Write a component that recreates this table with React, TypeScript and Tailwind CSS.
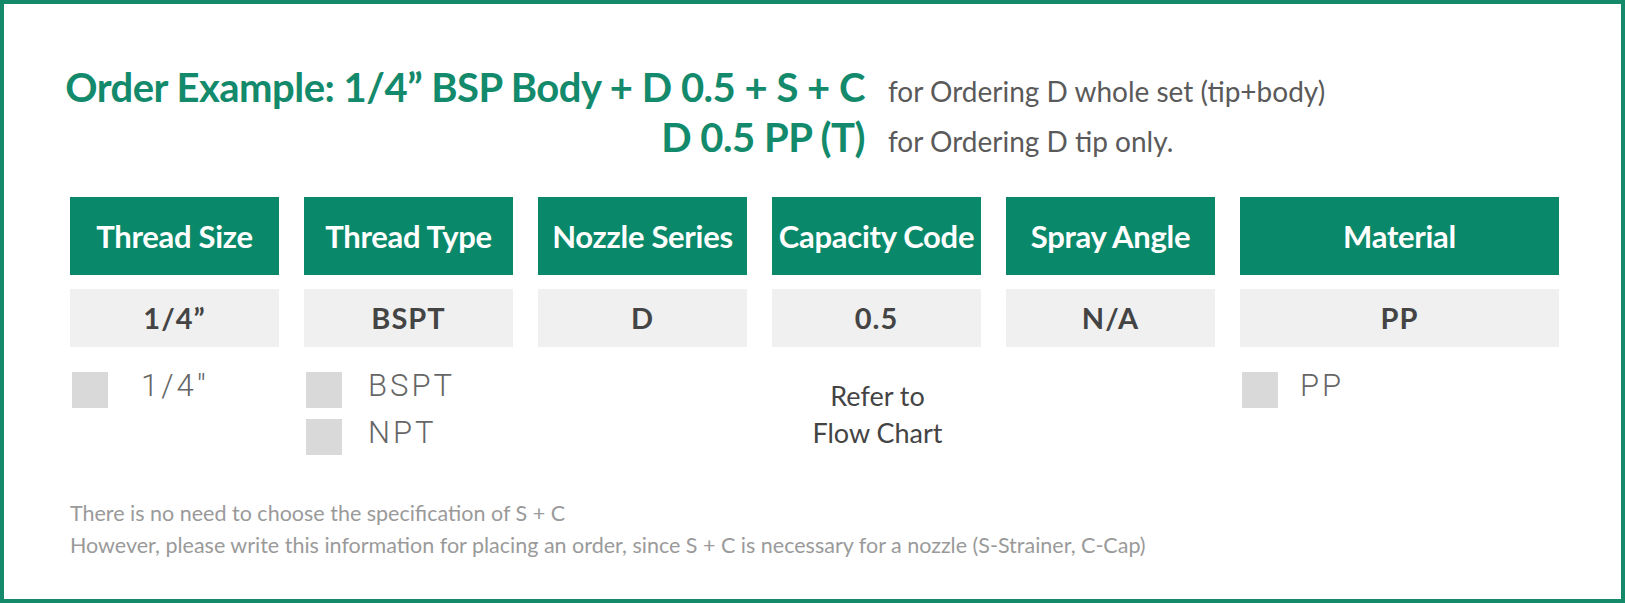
const columns = [
  { title: "Thread Size", value: "1/4”", options: [{ label: "1/4″", gap: "ml-[33px]" }], w: "w-[209px]" },
  {
    title: "Thread Type",
    value: "BSPT",
    options: [
      { label: "BSPT", gap: "ml-[26px]" },
      { label: "NPT", gap: "ml-[26px]" },
    ],
    w: "w-[209px]",
  },
  { title: "Nozzle Series", value: "D", options: [], w: "w-[209px]" },
  { title: "Capacity Code", value: "0.5", options: [], note: true, w: "w-[209px]" },
  { title: "Spray Angle", value: "N/A", options: [], w: "w-[209px]" },
  { title: "Material", value: "PP", options: [{ label: "PP", gap: "ml-[22px]" }], w: "w-[319px]" },
];

export default function App() {
  return (
    <div
      className="w-[1625px] h-[603px] border-4 border-[#148a6b] bg-white pl-[61px] pt-[60px]"
      style={{ fontFamily: "Lato, 'Open Sans', sans-serif" }}
    >
      {/* Order example */}
      <div className="grid grid-cols-[800px_auto] gap-x-[23px] items-baseline">
        <div className="text-right text-[40px] leading-[46px] font-bold text-[#138a6b] tracking-[-0.5px]">
          Order Example: 1/4” BSP Body + D 0.5 + S + C
        </div>
        <div className="text-[28px] leading-[46px] text-[#5a5a5a]">for Ordering D whole set (tip+body)</div>
        <div className="text-right text-[40px] leading-[46px] font-bold text-[#138a6b] tracking-[-0.5px]">
          D 0.5 PP (T)
        </div>
        <div className="text-[28px] leading-[46px] text-[#5a5a5a]">for Ordering D tip only.</div>
      </div>

      {/* Spec table */}
      <div className="mt-[33px] ml-[5px] flex items-start gap-x-[25px] h-[300px]">
        {columns.map((c) => (
          <div key={c.title} className={`${c.w} shrink-0 flex flex-col`}>
            <div className="h-[78px] bg-[#0a896a] flex items-center justify-center text-white text-[31px] font-bold whitespace-nowrap tracking-[-0.3px]">
              {c.title}
            </div>
            <div className="mt-[14px] h-[58px] bg-[#f0f0f0] flex items-center justify-center text-[#444] text-[29px] font-bold tracking-[1px]">
              {c.value}
            </div>
            <div className="mt-[25px] flex flex-col gap-[11px] pl-[2px]">
              {c.options.map((o) => (
                <div key={o.label} className="flex items-center h-[36px]">
                  <div className="w-[36px] h-[36px] bg-[#d9d9d9] shrink-0" />
                  <span
                    className={`${o.gap} text-[31px] font-light text-[#666] tracking-[3px] -mt-[8px]`}
                    style={{ fontFamily: "Roboto, 'Liberation Sans', sans-serif" }}
                  >
                    {o.label}
                  </span>
                </div>
              ))}
              {c.note && (
                <div className="text-center text-[27px] leading-[37px] text-[#444] pt-[5px]">
                  Refer to
                  <br />
                  Flow Chart
                </div>
              )}
            </div>
          </div>
        ))}
      </div>

      {/* Footnote */}
      <div className="ml-[5px] text-[21.5px] leading-[32px] text-[#9a9a9a]">
        <p>There is no need to choose the specification of S + C</p>
        <p>However, please write this information for placing an order, since S + C is necessary for a nozzle (S-Strainer, C-Cap)</p>
      </div>
    </div>
  );
}
